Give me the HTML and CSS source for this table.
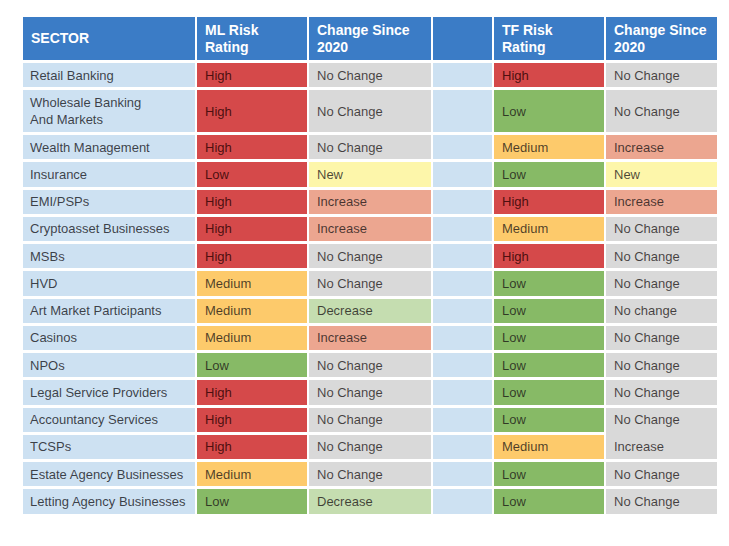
FILE: index.html
```html
<!DOCTYPE html>
<html lang="en">
<head>
<meta charset="utf-8">
<title>Sector Risk Ratings</title>
<link rel="stylesheet" href="styles.css">
</head>
<body>
<div class="risk-table">
  <div class="cell head">SECTOR</div>
  <div class="cell head">ML Risk<br>Rating</div>
  <div class="cell head">Change Since<br>2020</div>
  <div class="cell head"></div>
  <div class="cell head">TF Risk<br>Rating</div>
  <div class="cell head">Change Since<br>2020</div>

  <div class="cell sector">Retail Banking</div>
  <div class="cell high">High</div>
  <div class="cell same">No Change</div>
  <div class="cell spacer"></div>
  <div class="cell high">High</div>
  <div class="cell same">No Change</div>

  <div class="cell sector">Wholesale Banking<br>And Markets</div>
  <div class="cell high">High</div>
  <div class="cell same">No Change</div>
  <div class="cell spacer"></div>
  <div class="cell low">Low</div>
  <div class="cell same">No Change</div>

  <div class="cell sector">Wealth Management</div>
  <div class="cell high">High</div>
  <div class="cell same">No Change</div>
  <div class="cell spacer"></div>
  <div class="cell medium">Medium</div>
  <div class="cell increase">Increase</div>

  <div class="cell sector">Insurance</div>
  <div class="cell high">Low</div>
  <div class="cell new">New</div>
  <div class="cell spacer"></div>
  <div class="cell low">Low</div>
  <div class="cell new">New</div>

  <div class="cell sector">EMI/PSPs</div>
  <div class="cell high">High</div>
  <div class="cell increase">Increase</div>
  <div class="cell spacer"></div>
  <div class="cell high">High</div>
  <div class="cell increase">Increase</div>

  <div class="cell sector">Cryptoasset Businesses</div>
  <div class="cell high">High</div>
  <div class="cell increase">Increase</div>
  <div class="cell spacer"></div>
  <div class="cell medium">Medium</div>
  <div class="cell same">No Change</div>

  <div class="cell sector">MSBs</div>
  <div class="cell high">High</div>
  <div class="cell same">No Change</div>
  <div class="cell spacer"></div>
  <div class="cell high">High</div>
  <div class="cell same">No Change</div>

  <div class="cell sector">HVD</div>
  <div class="cell medium">Medium</div>
  <div class="cell same">No Change</div>
  <div class="cell spacer"></div>
  <div class="cell low">Low</div>
  <div class="cell same">No Change</div>

  <div class="cell sector">Art Market Participants</div>
  <div class="cell medium">Medium</div>
  <div class="cell decrease">Decrease</div>
  <div class="cell spacer"></div>
  <div class="cell low">Low</div>
  <div class="cell same">No change</div>

  <div class="cell sector">Casinos</div>
  <div class="cell medium">Medium</div>
  <div class="cell increase">Increase</div>
  <div class="cell spacer"></div>
  <div class="cell low">Low</div>
  <div class="cell same">No Change</div>

  <div class="cell sector">NPOs</div>
  <div class="cell low">Low</div>
  <div class="cell same">No Change</div>
  <div class="cell spacer"></div>
  <div class="cell low">Low</div>
  <div class="cell same">No Change</div>

  <div class="cell sector">Legal Service Providers</div>
  <div class="cell high">High</div>
  <div class="cell same">No Change</div>
  <div class="cell spacer"></div>
  <div class="cell low">Low</div>
  <div class="cell same">No Change</div>

  <div class="cell sector">Accountancy Services</div>
  <div class="cell high">High</div>
  <div class="cell same">No Change</div>
  <div class="cell spacer"></div>
  <div class="cell low">Low</div>
  <div class="cell same joined">No Change</div>

  <div class="cell sector">TCSPs</div>
  <div class="cell high">High</div>
  <div class="cell same">No Change</div>
  <div class="cell spacer"></div>
  <div class="cell medium">Medium</div>
  <div class="cell same">Increase</div>

  <div class="cell sector">Estate Agency Businesses</div>
  <div class="cell medium">Medium</div>
  <div class="cell same">No Change</div>
  <div class="cell spacer"></div>
  <div class="cell low">Low</div>
  <div class="cell same">No Change</div>

  <div class="cell sector">Letting Agency Businesses</div>
  <div class="cell low">Low</div>
  <div class="cell decrease">Decrease</div>
  <div class="cell spacer"></div>
  <div class="cell low">Low</div>
  <div class="cell same">No Change</div>
</div>
</body>
</html>
```

FILE: styles.css
```css
html, body {
  margin: 0;
  background: #ffffff;
}

body {
  padding: 17px 0 0 23px;
  font-family: "Liberation Sans", Arial, Helvetica, sans-serif;
}

.risk-table {
  display: grid;
  grid-template-columns: 172px 110px 122px 59px 110px 111px;
  grid-template-rows: 43px 24px 42px repeat(14, 24.25px);
  column-gap: 2px;
  row-gap: 3px;
  width: max-content;
}

.cell {
  display: flex;
  align-items: center;
  padding: 0 7px 0 8px;
  font-size: 13px;
  line-height: 17px;
  color: rgba(25, 20, 20, 0.78);
  white-space: nowrap;
}

.head {
  background: #3b7cc6;
  color: #ffffff;
  font-weight: bold;
  font-size: 14px;
  line-height: 17px;
}

.sector {
  background: #cde1f2;
  padding-left: 7px;
  color: rgba(20, 20, 25, 0.8);
}

.spacer {
  background: #cde1f2;
}

.high {
  background: #d5494a;
  color: rgba(40, 0, 0, 0.8);
}

.medium {
  background: #fdca6b;
}

.low {
  background: #87ba66;
}

.same {
  background: #d9d9d9;
}

.increase {
  background: #eca690;
}

.decrease {
  background: #c5ddb0;
}

.new {
  background: #fdf6aa;
}

.joined {
  box-shadow: 0 3px 0 #d9d9d9;
}
```
